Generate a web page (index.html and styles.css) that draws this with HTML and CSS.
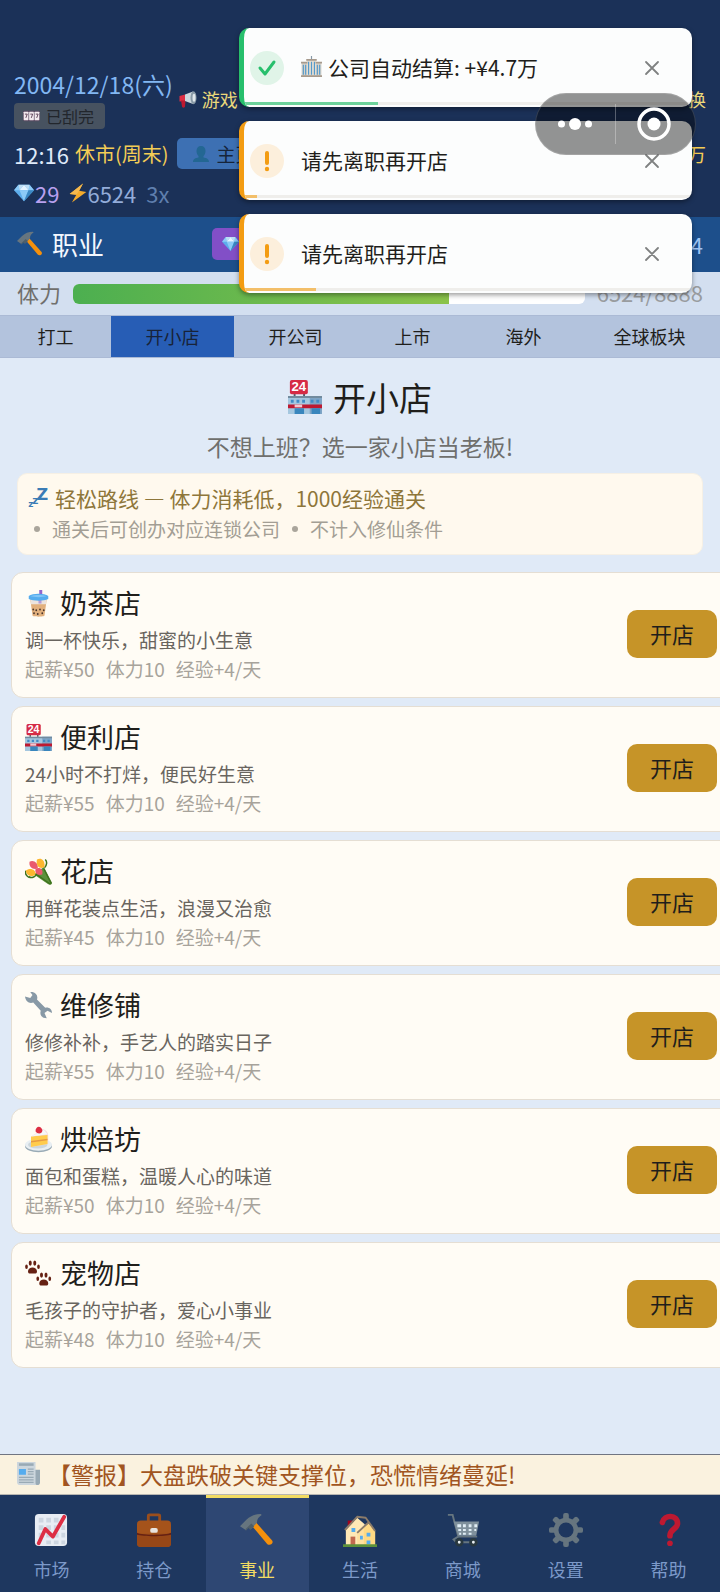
FILE: index.html
```html
<!DOCTYPE html>
<html lang="zh-CN">
<head>
<meta charset="utf-8">
<meta name="viewport" content="width=device-width, initial-scale=1">
<title>开小店</title>
<link rel="stylesheet" href="styles.css">
</head>
<body>
<svg class="sprite" aria-hidden="true">
  <symbol id="i-horn" viewBox="0 0 36 36">
    <path d="M1 12l11-3v13l-11 1z" fill="#dd2e44"/><path d="M4 21h9l-1 12c0 3-6 3-6 0z" fill="#be1931"/>
    <path d="M12 9L28 3v25l-16-6z" fill="#ccd6dd"/><ellipse cx="29" cy="15.500" rx="6" ry="13" fill="#8899a6"/><ellipse cx="30" cy="15.500" rx="3" ry="8" fill="#dfe6eb"/>
  </symbol>
  <symbol id="i-slots" viewBox="0 0 36 24">
    <rect x="0" y="1" width="36" height="22" rx="3" fill="#5b4a62"/>
    <g fill="#f3e9ee"><rect x="1.500" y="3" width="10" height="18" rx="1"/><rect x="13" y="3" width="10" height="18" rx="1"/><rect x="24.500" y="3" width="10" height="18" rx="1"/></g>
    <g fill="none" stroke="#5c3f55" stroke-width="2"><path d="M4 8h5l-3 8M15.500 8h5l-3 8M27 8h5l-3 8"/></g>
  </symbol>
  <symbol id="i-user" viewBox="0 0 36 36">
    <path d="M18 2c6 0 9 4 9 10 0 5-2 8-4 10v3c6 1 11 3 11 9H2c0-6 5-8 11-9v-3c-2-2-4-5-4-10C9 6 12 2 18 2z" fill="#236793"/>
  </symbol>
  <symbol id="i-diamond" viewBox="0 0 36 32">
    <path d="M8 1h20l8 10-18 20L0 11z" fill="#5dadec"/><path d="M8 1L0 11h10zM28 1l8 10H26z" fill="#8ccaf7"/><path d="M8 1l2 10L18 1zM28 1l-2 10L18 1z" fill="#bdddf4"/><path d="M18 1l-8 10h16z" fill="#e3f3ff"/><path d="M10 11h16l-8 20z" fill="#8ccaf7"/><path d="M26 11h10L18 31z" fill="#3b88c3"/>
  </symbol>
  <symbol id="i-bolt" viewBox="0 0 32 36"><path d="M25 1L1 20l12 1-8 14 26-19-13-2z" fill="#f4ab2c"/><path d="M25 1L1 20l12 1 5-7z" fill="#f5b94e"/></symbol>
  <symbol id="i-hammer" viewBox="0 0 36 36">
    <path d="M13 14l4-4 17 19c2 3-2 6-5 4z" fill="#f4900c"/><path d="M0 14l7-7C11 3 16 1 22 1l1 1c-3 2-5 4-5 8l-6 7-3-2-3 3z" fill="#66757f"/><path d="M6 17l6-6 3 3-4 4-2-2-3 3z" fill="#4f5f69"/>
  </symbol>
  <symbol id="i-store" viewBox="0 0 36 36">
    <path d="M6 14h2v5H6zM16 14h2v5h-2z" fill="#50606b"/><rect x="2" y="0" width="19" height="15" rx="2" fill="#d52b45"/>
    <text x="11.500" y="12" text-anchor="middle" class="sign">24</text>
    <path d="M0 17h36v19H0z" fill="#a5c7df"/><path d="M23 17h13v19H23z" fill="#7fa5c6"/><path d="M0 17h36v2H0z" fill="#728b9e"/>
    <path d="M3 21h3v3H3zM9 21h3v3H9zM15 21h3v3h-3zM24 21h3v3h-3zM30 21h3v3h-3z" fill="#428bc6"/>
    <path d="M0 26h36v4H0z" fill="#be1931"/><path d="M7 26h8v3H7z" fill="#f4c6ce"/><path d="M7 30h10v6H7zM25 30h9v6h-9z" fill="#3986bd"/>
  </symbol>
  <symbol id="i-zzz" viewBox="0 0 36 36">
    <text x="26" y="22" text-anchor="middle" class="z z-l">Z</text><text x="13" y="28" text-anchor="middle" class="z z-m">z</text><text x="5" y="34" text-anchor="middle" class="z z-s">z</text>
  </symbol>
  <symbol id="i-boba" viewBox="0 0 30 36">
    <path d="M16 0h4v9h-4z" fill="#9266cc"/><path d="M4 12h22l-3 22c0 2-16 2-16 0z" fill="#e2b07d"/><path d="M4 12h22l-1 7H5z" fill="#ece4df"/><path d="M15 12h4v6h-4z" fill="#b69bd6"/>
    <path d="M2 8c5-4 21-4 26 0v4c-6 3-20 3-26 0z" fill="#55acee"/><path d="M4 8c5-2 17-2 22 0-5 2-17 2-22 0z" fill="#82c5f6"/>
    <g fill="#49352c"><circle cx="8" cy="26" r="1.200"/><circle cx="12" cy="27" r="1.200"/><circle cx="17" cy="26" r="1.200"/><circle cx="22" cy="27" r="1.200"/><circle cx="9" cy="31" r="1.200"/><circle cx="14" cy="32" r="1.200"/><circle cx="20" cy="31" r="1.200"/></g>
  </symbol>
  <symbol id="i-tulip" viewBox="0 0 36 36">
    <path d="M12 22l13-10 11 21c0 3-3 3-5 2z" fill="#5c913b"/><path d="M1 17c-1 4 1 8 5 9M27 2c3 3 2 8-1 11" stroke="#3e721d" stroke-width="2" fill="none"/><path d="M14 21l20 14M25 14l10 20" stroke="#3e721d" stroke-width="2"/>
    <path d="M6 5c5-3 12 1 11 9-7 2-12-2-11-9z" fill="#ea596e"/><path d="M16 2c5-3 11 0 10 10-7 4-12-2-10-10z" fill="#fdb72f"/><path d="M1 17c5-5 14-2 13 5-5 4-12 2-13-5z" fill="#fdb72f"/><path d="M14 15c5-4 11 0 9 7-6 2-10-1-9-7z" fill="#ea596e"/><path d="M5 25c4 2 8 1 10-3" stroke="#3e721d" stroke-width="2" fill="none"/>
  </symbol>
  <symbol id="i-wrench" viewBox="0 0 36 36">
    <path d="M0 6l7 2 3-4-3-4c6-1 11 4 9 10l11 11c5-1 9 2 9 7l-6-3-4 3 3 7c-6 0-10-4-8-10L11 14C6 16 1 13 0 6z" fill="#8899a6"/>
  </symbol>
  <symbol id="i-cake" viewBox="0 0 36 36">
    <ellipse cx="18" cy="27" rx="18" ry="8" fill="#99aab5"/><ellipse cx="18" cy="25" rx="18" ry="8" fill="#e9eff3"/><ellipse cx="17" cy="25" rx="13" ry="5" fill="#ccd6dd"/>
    <path d="M8 14l16-10c4 1 7 5 7 9v11L8 28z" fill="#f4dce0"/><path d="M8 14l22-2v12L8 28z" fill="#ffcc4d"/><path d="M8 14l22-3-5-6z" fill="#f5f8fa"/><path d="M8 20l22-3v2L8 22z" fill="#e79a45"/>
    <path d="M14 7c0-7 7-8 9-2 1 5-6 7-9 2z" fill="#dd2e44"/>
  </symbol>
  <symbol id="i-paws" viewBox="0 0 36 36">
    <g id="paw" fill="#662113"><path d="M4 15c0-3 3-5 6-5s6 2 6 5c0 4-3 3-6 3s-6 1-6-3z"/><ellipse cx="2" cy="9" rx="1.800" ry="3"/><ellipse cx="7" cy="4" rx="2" ry="3.500"/><ellipse cx="13" cy="4" rx="2" ry="3.500"/><ellipse cx="18" cy="9" rx="1.800" ry="3"/></g>
    <use href="#paw" x="15" y="16"/>
  </symbol>
  <symbol id="i-news" viewBox="0 0 36 36">
    <path d="M25 12h11v20c0 3-2 4-4 4H8z" fill="#99aab5"/><path d="M0 0h29v32c0 3 1 4 3 4H4c-3 0-4-2-4-5z" fill="#ccd6dd"/><path d="M3 4h23" stroke="#99aab5" stroke-width="4"/><path d="M3 11h11v9H3z" fill="#55acee"/><path d="M17 11h9M17 15h9M17 19h9M3 24h23M3 28h23M3 32h23" stroke="#99aab5" stroke-width="2"/>
  </symbol>
  <symbol id="i-chart" viewBox="0 0 36 36">
    <rect x="1" y="1" width="34" height="34" rx="4" fill="#e8edf4"/><path d="M5 5h5v5H5zm8 0h5v5h-5zm8 0h5v5h-5zM5 13h5v5H5zm8 0h5v5h-5zm8 0h5v5h-5zm8 0h4v5h-4zM5 21h5v5H5zm8 0h5v5h-5zm8 0h5v5h-5zm8 0h4v5h-4zm-16 8h5v4h-5zm8 0h5v4h-5zm8 0h4v4h-4z" fill="#cdd6e1"/>
    <path d="M5 32l7-15 8 8L32 4" fill="none" stroke="#dd2e44" stroke-width="4" stroke-linecap="round" stroke-linejoin="round"/>
  </symbol>
  <symbol id="i-case" viewBox="0 0 36 36">
    <path d="M12 9V3c0-1 1-1 1-1h10s1 0 1 1v6" fill="none" stroke="#9a4e1c" stroke-width="3"/><rect y="8" width="36" height="28" rx="4" fill="#a5531b"/><path d="M0 22h36v10c0 3-2 4-4 4H4c-2 0-4-1-4-4z" fill="#974717"/><path d="M0 21c6 3 30 3 36 0v2c-6 2-30 2-36 0z" fill="#662113"/><rect x="14" y="16" width="8" height="5" rx="2" fill="#e8e4df"/>
  </symbol>
  <symbol id="i-house" viewBox="0 0 36 36">
    <path d="M5 8h5v8H5z" fill="#a0041e"/><path d="M3 18L15 5l8 7v22H3z" fill="#ffe8b6"/><path d="M15 21l12-10 7 8v15H15z" fill="#ffe0a0"/><path d="M22 16l5-5 7 8v15H22z" fill="#ffd983"/>
    <path d="M2 18L15 4l9 1 10 14M15 21L27 10" fill="none" stroke="#8b7b6a" stroke-width="2" stroke-linejoin="round"/>
    <path d="M8 25h5v9H8z" fill="#c1694f"/><path d="M9 16h4v4H9zm16 5h4v4h-4zm0 8h4v4h-4zm-7-5h3v4h-3z" fill="#55acee"/><path d="M0 33h36v3H0z" fill="#5c913b"/>
  </symbol>
  <symbol id="i-cart" viewBox="0 0 36 36">
    <path d="M2 2h5l6 23h20M13 25l-5 3 3 3h22" fill="none" stroke="#66757f" stroke-width="2"/><path d="M8 9h27l-3 15H13z" fill="#7f909c"/><path d="M12 12h4v3h-4zm6 0h3v3h-3zm6 0h3v3h-3zm6 0h3v3h-3zM13 17h3v2h-3zm5 0h3v2h-3zm6 0h3v2h-3zm6 0h2v2h-2zm-16 4h2v2h-2zm4 0h3v2h-3zm6 0h3v2h-3z" fill="#e0edf5"/>
    <g fill="#e8eef2" stroke="#29383f" stroke-width="3"><circle cx="14" cy="31" r="3"/><circle cx="29" cy="31" r="3"/></g>
  </symbol>
  <symbol id="i-gear" viewBox="0 0 36 36">
    <g fill="#66757f"><g id="teeth"><rect x="15" width="6" height="36" rx="2"/><rect y="15" width="36" height="6" rx="2"/></g><use href="#teeth" transform="rotate(45 18 18)"/><circle cx="18" cy="18" r="13"/></g><circle cx="18" cy="18" r="8" fill="#1e375f"/>
  </symbol>
  <symbol id="i-help" viewBox="0 0 36 36">
    <path d="M11 10c2-9 16-8 16 1 0 6-8 6-8 13" fill="none" stroke="#be1931" stroke-width="6" stroke-linecap="round"/><circle cx="19" cy="32" r="3" fill="#be1931"/>
  </symbol>
  <symbol id="i-hall" viewBox="0 0 36 36">
    <path d="M17 0h2v6h-2z" fill="#8899a6"/><path d="M1 12h34v23H1z" fill="#d8d2c8"/><path d="M10 6h16v29H10z" fill="#e5ddd1"/><path d="M0 10h11v3H0zm25 0h11v3H25zM9 5h18v3H9z" fill="#a69a8d"/>
    <path d="M3 15h2v17H3zm4 0h2v17H7zm5-5h2v22h-2zm5 0h2v22h-2zm5 0h2v22h-2zm5 5h2v17h-2zm4 0h2v17h-2z" fill="#549acb"/><path d="M0 33h36v3H0z" fill="#a69a8d"/>
  </symbol>
  <symbol id="i-close" viewBox="0 0 16 16"><path d="M2 2l12 12M14 2L2 14" stroke="#7f8181" stroke-width="1.800" stroke-linecap="round"/></symbol>
  <symbol id="i-check" viewBox="0 0 34 34"><path d="M10 17l5 6 9-12" fill="none" stroke="#27bf6c" stroke-width="3" stroke-linecap="round" stroke-linejoin="round"/></symbol>
  <symbol id="i-warn" viewBox="0 0 34 34"><path d="M17 9v10" stroke="#f39c12" stroke-width="4" stroke-linecap="round"/><circle cx="17" cy="25" r="2.200" fill="#f39c12"/></symbol>
</svg>

<div class="page">
  <header class="status">
    <div class="status-row">
      <div class="date-block">
        <div class="date">2004/12/18(六)</div>
        <button class="scratch" type="button"><svg><use href="#i-slots"/></svg>已刮完</button>
      </div>
      <div class="notice"><svg><use href="#i-horn"/></svg><span>游戏</span><span class="end">换</span></div>
    </div>
    <div class="status-row clock-row">
      <span class="clock">12:16</span>
      <span class="market">休市(周末)</span>
      <button class="home" type="button"><svg><use href="#i-user"/></svg>主页</button>
      <span class="money">万</span>
    </div>
    <div class="status-row stats-row">
      <span class="gems"><svg><use href="#i-diamond"/></svg>29</span>
      <span class="energy"><svg><use href="#i-bolt"/></svg>6524</span>
      <span class="speed">3x</span>
    </div>
  </header>

  <section class="job-bar">
    <h1><svg><use href="#i-hammer"/></svg>职业</h1>
    <button class="gem-button" type="button" aria-label="钻石"><svg><use href="#i-diamond"/></svg></button>
    <span class="level">4</span>
  </section>

  <section class="stamina">
    <span>体力</span>
    <div class="meter"><div class="meter-fill" style="width:73.4%"></div></div>
    <span class="amount">6524/8888</span>
  </section>

  <nav class="tabs">
    <button type="button">打工</button><button type="button" class="active">开小店</button><button type="button">开公司</button><button type="button">上市</button><button type="button">海外</button><button type="button">全球板块</button>
  </nav>

  <main>
    <h2><svg><use href="#i-store"/></svg>开小店</h2>
    <p class="lead">不想上班？选一家小店当老板!</p>
    <section class="tip">
      <p class="tip-title"><svg><use href="#i-zzz"/></svg>轻松路线 — 体力消耗低，1000经验通关</p>
      <ul><li>通关后可创办对应连锁公司</li><li>不计入修仙条件</li></ul>
    </section>

    <div class="shops">
      <article class="shop"><div><h3><svg><use href="#i-boba"/></svg>奶茶店</h3><p>调一杯快乐，甜蜜的小生意</p><div class="facts"><span>起薪¥50</span><span>体力10</span><span>经验+4/天</span></div></div><button type="button">开店</button></article>
      <article class="shop"><div><h3><svg><use href="#i-store"/></svg>便利店</h3><p>24小时不打烊，便民好生意</p><div class="facts"><span>起薪¥55</span><span>体力10</span><span>经验+4/天</span></div></div><button type="button">开店</button></article>
      <article class="shop"><div><h3><svg><use href="#i-tulip"/></svg>花店</h3><p>用鲜花装点生活，浪漫又治愈</p><div class="facts"><span>起薪¥45</span><span>体力10</span><span>经验+4/天</span></div></div><button type="button">开店</button></article>
      <article class="shop"><div><h3><svg><use href="#i-wrench"/></svg>维修铺</h3><p>修修补补，手艺人的踏实日子</p><div class="facts"><span>起薪¥55</span><span>体力10</span><span>经验+4/天</span></div></div><button type="button">开店</button></article>
      <article class="shop"><div><h3><svg><use href="#i-cake"/></svg>烘焙坊</h3><p>面包和蛋糕，温暖人心的味道</p><div class="facts"><span>起薪¥50</span><span>体力10</span><span>经验+4/天</span></div></div><button type="button">开店</button></article>
      <article class="shop"><div><h3><svg><use href="#i-paws"/></svg>宠物店</h3><p>毛孩子的守护者，爱心小事业</p><div class="facts"><span>起薪¥48</span><span>体力10</span><span>经验+4/天</span></div></div><button type="button">开店</button></article>
    </div>
  </main>

  <div class="ticker"><svg><use href="#i-news"/></svg><span>【警报】大盘跌破关键支撑位，恐慌情绪蔓延!</span></div>

  <nav class="bottom-nav">
    <a href="#market"><svg><use href="#i-chart"/></svg>市场</a>
    <a href="#holdings"><svg><use href="#i-case"/></svg>持仓</a>
    <a href="#career" class="active"><svg><use href="#i-hammer"/></svg>事业</a>
    <a href="#life"><svg><use href="#i-house"/></svg>生活</a>
    <a href="#shop"><svg><use href="#i-cart"/></svg>商城</a>
    <a href="#settings"><svg><use href="#i-gear"/></svg>设置</a>
    <a href="#help"><svg><use href="#i-help"/></svg>帮助</a>
  </nav>

  <div class="toasts">
    <div class="toast success" role="status">
      <svg class="mark"><use href="#i-check"/></svg>
      <p><svg><use href="#i-hall"/></svg>公司自动结算: +¥4.7万</p>
      <button type="button" aria-label="关闭"><svg><use href="#i-close"/></svg></button>
      <div class="timer"><div style="width:30%"></div></div>
    </div>
    <div class="toast" role="status">
      <svg class="mark"><use href="#i-warn"/></svg>
      <p>请先离职再开店</p>
      <button type="button" aria-label="关闭"><svg><use href="#i-close"/></svg></button>
      <div class="timer"><div style="width:3%"></div></div>
    </div>
    <div class="toast" role="status">
      <svg class="mark"><use href="#i-warn"/></svg>
      <p>请先离职再开店</p>
      <button type="button" aria-label="关闭"><svg><use href="#i-close"/></svg></button>
      <div class="timer"><div style="width:16%"></div></div>
    </div>
  </div>

  <div class="capsule">
    <button type="button" aria-label="更多"><svg viewBox="0 0 34 14"><g fill="#fff"><circle cx="3.500" cy="7" r="3.500"/><circle cx="17" cy="7" r="6"/><circle cx="30.500" cy="7" r="3.500"/></g></svg></button>
    <button type="button" aria-label="退出"><svg viewBox="0 0 34 34"><circle cx="17" cy="17" r="15" fill="none" stroke="#fff" stroke-width="3.500"/><circle cx="17" cy="17" r="6.500" fill="#fff"/></svg></button>
  </div>
</div>
</body>
</html>
```
FILE: styles.css
```css
* { box-sizing: border-box; }
body, h1, h2, h3, p, ul { margin: 0; padding: 0; }
body {
  font-family: "Noto Sans CJK SC", "Noto Sans", sans-serif;
  font-weight: 400;
  color: #1f1e1b;
  background: #e0eaf7;
}
h1, h2, h3 { font-weight: 400; }
button { font: inherit; color: inherit; border: 0; padding: 0; background: none; }
svg { flex: none; display: block; }
.sprite { display: none; }
.sign { font: 700 14px "Liberation Sans", sans-serif; fill: #fff; }
.z { font-family: "DejaVu Sans", sans-serif; font-weight: 700; fill: #3b7cb5; }
.z-l { font-size: 29px; }
.z-m { font-size: 19px; }
.z-s { font-size: 16px; }

.page {
  position: relative;
  min-height: 100vh;
  display: flex;
  flex-direction: column;
  overflow: hidden;
}

.status {
  background: #1b3158;
  padding: 68px 14px 10px;
  display: flex;
  flex-direction: column;
  gap: 9px;
}
.status-row { display: flex; align-items: center; }
.date { font-size: 23px; line-height: 32px; color: #82b7f3; white-space: nowrap; }
.scratch {
  display: flex;
  align-items: center;
  gap: 6px;
  height: 26px;
  margin-top: 3px;
  padding: 0 11px 0 9px;
  border-radius: 4px;
  background: #475260;
  color: #22262c;
  font-size: 16px;
  line-height: 24px;
}
.scratch svg { width: 17px; height: 12px; }
.notice {
  flex: 1;
  display: flex;
  align-items: center;
  gap: 5px;
  margin-left: 6px;
  font-size: 18px;
  color: #ecd97b;
}
.notice svg { width: 18px; height: 18px; }
.end { margin-left: auto; }
.clock-row { height: 31px; }
.clock { font-size: 22px; color: #dfe9f8; margin-right: 6px; }
.market { font-size: 20px; color: #f4cd55; margin-right: 8px; }
.home {
  display: flex;
  align-items: center;
  gap: 7px;
  height: 31px;
  padding: 0 15px;
  border-radius: 5px;
  background: #3d70b3;
  color: #16243a;
  font-size: 19px;
}
.home svg { width: 18px; height: 18px; }
.money { margin-left: auto; font-size: 19px; color: #f4cd55; }
.stats-row { height: 29px; gap: 10px; font-size: 22px; }
.gems, .energy { display: flex; align-items: center; }
.gems { color: #b8a0ee; gap: 1px; }
.gems svg { width: 20px; height: 18px; }
.energy { color: #93acd9; }
.energy svg { width: 18px; height: 20px; }
.speed { color: #5f7fae; }

.job-bar {
  display: flex;
  align-items: center;
  height: 55px;
  padding: 0 17px 2px;
  background: #1d4f8b;
  color: #f3f8ff;
}
.job-bar h1 { display: flex; align-items: center; gap: 9px; font-size: 26px; }
.job-bar h1 svg { width: 26px; height: 26px; }
.gem-button {
  display: flex;
  align-items: center;
  width: 90px;
  height: 32px;
  margin-left: 108px;
  padding: 0 10px;
  border-radius: 5px;
  background: #824fc7;
}
.gem-button svg { width: 17px; height: 16px; }
.level { margin-left: auto; font-size: 22px; color: #9fc3f2; }

.stamina {
  display: flex;
  align-items: center;
  gap: 12px;
  height: 43px;
  padding: 0 17px;
  background: #d3dff0;
  color: #706f6d;
  font-size: 22px;
  line-height: 32px;
}
.stamina > span { padding-bottom: 3px; }
.meter { flex: 1; height: 20px; border-radius: 6px; background: #fff; overflow: hidden; }
.meter-fill { height: 100%; background: linear-gradient(90deg, #4caf50, #8bc34a); }
.amount { color: #999c9f; }

.tabs {
  display: grid;
  grid-template-columns: 37fr 41fr 41fr 37fr 37fr 47fr;
  height: 43px;
  background: #b3c3dd;
  border-top: 1px solid #abbad5;
  border-bottom: 1px solid #abbad5;
}
.tabs button { font-size: 18px; padding-bottom: 2px; }
.tabs .active { background: #275db5; color: #182338; }

main { flex: 1; padding: 13px 17px 24px; }
h2 {
  display: flex;
  justify-content: center;
  align-items: center;
  gap: 11px;
  font-size: 33px;
  line-height: 52px;
}
h2 svg { width: 34px; height: 34px; }
.lead { text-align: center; font-size: 23px; line-height: 36px; margin-top: 5px; color: #6f6f6d; }
.tip {
  margin-top: 9px;
  height: 82px;
  padding: 8px 10px;
  border: 1px solid #f6f0e5;
  border-radius: 10px;
  background: #fff9ee;
}
.tip-title { display: flex; align-items: center; gap: 7px; font-size: 21px; line-height: 32px; color: #8e763a; }
.tip-title svg { width: 20px; height: 20px; }
.tip ul { display: flex; list-style: none; font-size: 19px; line-height: 30px; color: #a39e94; }
.tip li { display: flex; align-items: center; gap: 12px; padding-left: 6px; margin-right: 6px; }
.tip li::before { content: ""; width: 6px; height: 6px; border-radius: 50%; background: #aaa59b; }

.shops { display: flex; flex-direction: column; gap: 8px; margin: 17px -29px 0 -6px; }
.shop {
  display: flex;
  align-items: center;
  justify-content: space-between;
  padding: 12px 14px 14px 13px;
  border: 1px solid #e5ded3;
  border-radius: 12px;
  background: #fffcf5;
}
.shop h3 { display: flex; align-items: center; gap: 8px; font-size: 27px; line-height: 36px; }
.shop h3 svg { width: 27px; height: 27px; }
.shop p { margin-top: 4px; font-size: 19px; line-height: 30px; color: #69655f; }
.facts { display: flex; gap: 11px; font-size: 19px; line-height: 28px; color: #a7a39b; }
.shop button { width: 90px; height: 48px; padding-bottom: 2px; border-radius: 10px; background: #c69428; font-size: 22px; }

.ticker {
  display: flex;
  align-items: center;
  gap: 8px;
  height: 41px;
  padding: 0 17px 2px;
  border-top: 1px solid #707582;
  border-bottom: 1px solid #b8b6b0;
  background: #faf2df;
  color: #a15521;
  font-size: 23px;
  white-space: nowrap;
}
.ticker svg { width: 23px; height: 23px; }

.bottom-nav { display: grid; grid-template-columns: repeat(7, 1fr); background: #1e375f; }
.bottom-nav a {
  display: flex;
  flex-direction: column;
  align-items: center;
  gap: 8px;
  height: 97px;
  padding-top: 15px;
  border-top: 3px solid transparent;
  color: #7c99c9;
  text-decoration: none;
  font-size: 18px;
  line-height: 28px;
}
.bottom-nav svg { width: 34px; height: 34px; }
.bottom-nav .active { background: #2e4773; border-top-color: #f2dc63; color: #f2dc63; }

.toasts {
  position: absolute;
  top: 28px;
  left: 33.2%;
  right: 28px;
  display: flex;
  flex-direction: column;
  gap: 14px;
}
.toast {
  position: relative;
  display: flex;
  align-items: center;
  height: 79px;
  padding: 0 25px 0 6px;
  border-left: 5px solid #f39c12;
  border-radius: 10px;
  background: #fcfdfd;
  box-shadow: 0 2px 5px rgba(0, 0, 0, 0.4);
  overflow: hidden;
}
.mark { width: 34px; height: 34px; border-radius: 50%; background: #fcefdc; }
.toast p { flex: 1; display: flex; align-items: center; gap: 6px; margin-left: 17px; padding-bottom: 2px; font-size: 21px; }
.toast p svg { width: 21px; height: 21px; }
.toast button { padding: 0 7px; }
.toast button svg { width: 16px; height: 16px; }
.timer { position: absolute; left: 0; right: 0; bottom: 2px; height: 3px; background: #efeeeb; }
.timer div { height: 100%; background: #f3bf69; }
.success { border-left-color: #27bf6c; }
.success .mark { background: #e0f4e8; }
.success .timer div { background: #6dd29b; }

.capsule {
  position: absolute;
  top: 93px;
  right: 24px;
  display: grid;
  grid-template-columns: 1fr 1fr;
  width: 161px;
  height: 62px;
  padding: 10px 2px 10px 0;
  border: 1px solid rgba(255, 255, 255, 0.15);
  border-radius: 31px;
  background: rgba(0, 0, 0, 0.42);
}
.capsule button { display: flex; align-items: center; justify-content: center; }
.capsule button + button { border-left: 1px solid rgba(255, 255, 255, 0.3); }
.capsule button:first-child svg { width: 34px; height: 14px; }
.capsule button:last-child svg { width: 34px; height: 34px; }
```
